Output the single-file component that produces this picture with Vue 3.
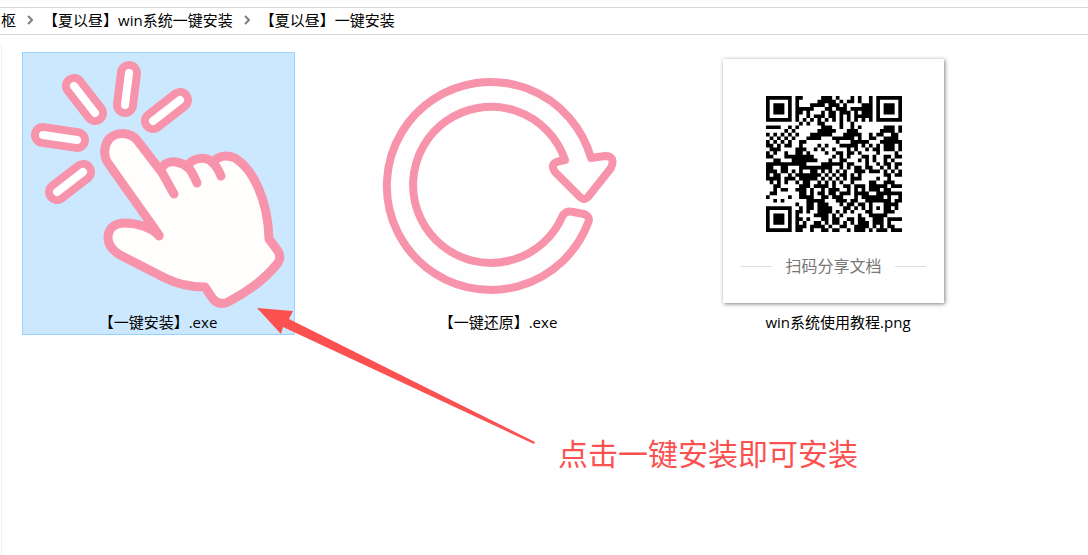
<script setup>
import { ref } from 'vue'

const selected = ref('install')

const qrRows = [
  '1111111011000001110100010100101111111',
  '1000001010000011111010110100101000001',
  '1011101010001111011101000011101011101',
  '1011101011111000110111011111101011101',
  '1011101011010001011011101011101011101',
  '1000001010010111011010101111101000001',
  '1111111010101010101010101010101111111',
  '0000000001010011000010010000000000000',
  '1111001010000001110010010100000011101',
  '0000010100000011111000111000000111101',
  '1010101010001111110001111100101100110',
  '0101010100011110001111110100110011110',
  '1010101001100000000100011111000111111',
  '1101011001000010100011111010101011101',
  '0111000011100101001000101001011011101',
  '1010010011010000100110110100001000010',
  '1100011111111000001010100011010011011',
  '0011000111111100010011000101010010100',
  '1111111111100001111110110001001011011',
  '1100110001111111110010101101100101010',
  '1110110101001101010101001110111010101',
  '1011001011111110101011010100000011011',
  '1111011101111101010101011100001001000',
  '0101010010110010101010010000110011100',
  '0011000001110111101001101110111110111',
  '0010110011101001011100101010111011000',
  '0110000001101011011011101111001111111',
  '1000001001111001101110001011111101001',
  '0010100000011111000111011001111111011',
  '0000000010011011100010110110100011110',
  '1111111001011011110001101010101011010',
  '1000001011010011110101010001100011100',
  '1011101010000111101010000100111110000',
  '1011101011010001101100110110011101111',
  '1011101010100110101101010111011101000',
  '1000001011101111010011001111010101100',
  '1111111011001001101100101110101110111'
]

const qrPath = qrRows
  .flatMap((row, y) =>
    [...row.matchAll(/1+/g)].map((m) => `M${m.index} ${y}h${m[0].length}v1h-${m[0].length}z`)
  )
  .join('')

const rays = 'M74 85L95 112M129 72L125 104M43 134L77 139M83 171L57 191M153 120L180 99'
</script>

<template>
  <div class="explorer">
    <nav class="path" aria-label="路径">
      <a class="crumb" href="#">枢</a>
      <svg class="chevron" viewBox="0 0 6 10" aria-hidden="true"><path d="M1 1L5 5L1 9" /></svg>
      <a class="crumb" href="#">【夏以昼】win系统一键安装</a>
      <svg class="chevron" viewBox="0 0 6 10" aria-hidden="true"><path d="M1 1L5 5L1 9" /></svg>
      <a class="crumb" href="#">【夏以昼】一键安装</a>
    </nav>

    <main class="files">
      <button class="file" :class="{ selected: selected === 'install' }" @click="selected = 'install'">
        <span class="preview">
          <svg class="icon" viewBox="30 56 256 256" aria-hidden="true">
            <path class="ray-outer" :d="rays" />
            <path class="ray-inner" :d="rays" />
            <path
              class="hand"
              d="M159 234L108 162C103 155 104 144 109 138C117 130 130 131 137 139L160 169C164 162 170 160 176 161C181 162 184 163 187 166C191 157 206 154 213 162C217 155 226 153 235 157C253 168 268 199 269 238L278 250Q282 257 277 263C265 278 247 291 228 301Q219 305 213 298L205 286C190 286 177 283 165 277L120 254C112 249 108 244 108 237C108 227 115 222 125 222C138 222 151 227 159 234Z"
            />
            <path class="crease" d="M160 168L174 193M187 165Q192 170 197 182M212 161Q217 165 221 175M159 235L148 219" />
          </svg>
        </span>
        <span class="name">【一键安装】.exe</span>
      </button>

      <button class="file" :class="{ selected: selected === 'restore' }" @click="selected = 'restore'">
        <span class="preview">
          <svg class="icon" viewBox="370 56 256 256" aria-hidden="true">
            <path
              class="loop"
              d="M591 157A104 104 0 1 0 588 222Q591 216 584 213L573 211Q567 209 563 214A78 78 0 1 1 565 159L560 160Q549 162 555 171L580 196Q584 200 588 196L611 167Q616 155 605 155Z"
            />
          </svg>
        </span>
        <span class="name">【一键还原】.exe</span>
      </button>

      <button class="file" :class="{ selected: selected === 'guide' }" @click="selected = 'guide'">
        <span class="preview">
          <span class="picture">
            <svg class="qr" viewBox="0 0 37 37" role="img" aria-label="二维码"><path :d="qrPath" /></svg>
            <span class="caption">扫码分享文档</span>
          </span>
        </span>
        <span class="name">win系统使用教程.png</span>
      </button>
    </main>

    <svg class="arrow" viewBox="0 0 280 137" aria-hidden="true">
      <path d="M0 0L36 3L32 11L278 134L277 136L26 19L24 26Z" />
    </svg>
    <p class="note">点击一键安装即可安装</p>
  </div>
</template>

<style>
body {
  background: #fff;
}
</style>

<style scoped>
.explorer {
  position: relative;
  min-height: 100vh;
  box-sizing: border-box;
  padding-top: 7px;
  overflow: hidden;
  display: flex;
  flex-direction: column;
  gap: 9px;
  color: #000;
  font-family: "Open Sans", "Noto Sans CJK SC", sans-serif;
  font-size: 15px;
  line-height: 20px;
}
.path {
  display: flex;
  align-items: center;
  height: 24px;
  padding: 0 1px 2px;
  border-top: 1px solid #d9d9d9;
  border-bottom: 1px solid #d9d9d9;
}
.crumb {
  color: inherit;
  text-decoration: none;
  white-space: nowrap;
}
.chevron {
  width: 6px;
  height: 10px;
  margin: 0 10px 0 11px;
  fill: none;
  stroke: #808080;
  stroke-width: 2;
}
.files {
  flex: 1;
  display: flex;
  flex-wrap: wrap;
  align-items: flex-start;
  align-content: flex-start;
  gap: 20px 67px;
  margin-left: 1px;
  padding: 8px 20px;
  border-left: 1px solid #f0f0f0;
}
.file {
  display: flex;
  flex-direction: column;
  align-items: center;
  width: 273px;
  padding: 3px 8px 3px 7px;
  border: 1px solid transparent;
  background: none;
  color: inherit;
  font: inherit;
}
.selected {
  background: #cce8ff;
  border-color: #99d1ff;
}
.preview {
  display: flex;
  align-items: center;
  justify-content: center;
  height: 257px;
}
.icon {
  width: 256px;
  height: 256px;
  fill: none;
  stroke: #f794ab;
  stroke-linecap: round;
  stroke-linejoin: round;
}
.ray-outer {
  stroke-width: 24;
}
.ray-inner {
  stroke: #fff;
  stroke-width: 8;
}
.hand {
  fill: #fffefd;
  stroke-width: 9;
}
.crease {
  stroke-width: 9;
}
.loop {
  fill: #fffefe;
  stroke-width: 8;
}
.name {
  line-height: 18px;
}
.picture {
  display: flex;
  flex-direction: column;
  align-items: center;
  gap: 24px;
  width: 221px;
  height: 244px;
  box-sizing: border-box;
  padding-top: 37px;
  margin-bottom: 7px;
  margin-right: 9px;
  background: #fff;
  box-shadow: 1px 1px 4px rgba(0, 0, 0, 0.5);
}
.qr {
  width: 136px;
  height: 136px;
}
.caption {
  display: flex;
  align-items: center;
  gap: 13px;
  color: #777;
  font-size: 16px;
  line-height: 20px;
}
.caption::before,
.caption::after {
  content: "";
  width: 31px;
  height: 1px;
  background: #ddd;
}
.arrow {
  position: absolute;
  left: 257px;
  top: 308px;
  width: 280px;
  height: 137px;
  fill: #fc5151;
  pointer-events: none;
}
.note {
  position: absolute;
  left: 558px;
  top: 434px;
  margin: 0;
  color: #fc5151;
  font-size: 30px;
  line-height: 40px;
  white-space: nowrap;
}
</style>
